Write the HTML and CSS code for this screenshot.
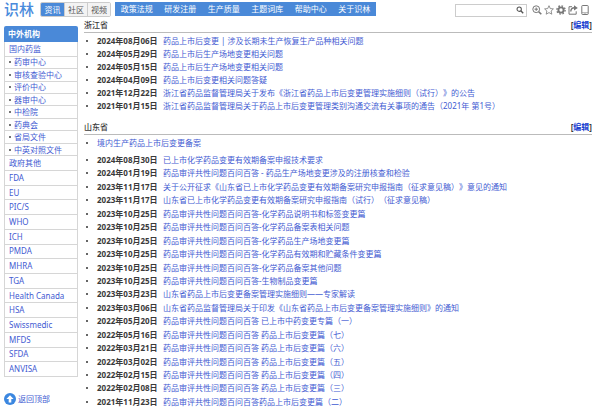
FILE: index.html
```html
<!DOCTYPE html>
<html lang="zh-CN">
<head>
<meta charset="utf-8">
<title>识林</title>
<link rel="stylesheet" href="styles.css">
</head>
<body>
<header class="top">
  <a class="logo" href="#">识林</a>
  <nav class="tabs"><a class="active" href="#">资讯</a><a href="#">社区</a><a href="#">视频</a></nav>
  <nav class="menu"><a href="#">政策法规</a><a href="#">研发注册</a><a href="#">生产质量</a><a href="#">主题词库</a><a href="#">帮助中心</a><a href="#">关于识林</a></nav>
  <form class="search">
    <input type="text" aria-label="搜索">
    <button type="button" aria-label="搜索"><svg viewBox="0 0 10 10"><circle cx="4" cy="4" r="2.7"/><path d="M6 6l3 3" stroke-width="1.8"/></svg></button>
  </form>
  <div class="tools">
    <a href="#" aria-label="高级搜索"><svg viewBox="0 0 10 10"><circle cx="4.2" cy="4.2" r="3.4"/><path d="M6.7 6.7l2.6 2.6" stroke-width="1.6"/><path d="M2.5 4.2h3.4M4.2 2.5v3.4"/></svg></a>
    <a href="#" aria-label="收藏"><svg viewBox="0 0 10 10"><path d="M5 .7l1.3 2.9 3.1.3-2.3 2.1.7 3.2L5 7.6 2.2 9.2l.7-3.2L.6 3.9l3.1-.3z" stroke-width=".8"/></svg></a>
    <a href="#" aria-label="设置"><svg viewBox="0 0 10 10"><circle cx="5" cy="5" r="2.6" stroke-width="1.9"/><circle cx="5" cy="5" r="4.1" stroke-width="1.4" stroke-dasharray="1.6 1.62"/></svg></a>
    <a href="#" aria-label="分享"><svg viewBox="0 0 10 10"><path d="M4 1.7H1v7.5h7.2V6.3"/><path d="M2.8 6.6c0-2.6 1.3-3.8 3.7-3.8" stroke-width="1.4"/><path class="solid" d="M6 .3l3.8 2.6L6 5.5z"/></svg></a>
    <a href="#" aria-label="手机版"><svg viewBox="0 0 10 10"><rect x="1.8" y=".5" width="6.4" height="9" rx=".7"/><path d="M2 7.7h6M4.4 8.7h1.2" stroke-width=".6"/></svg></a>
  </div>
</header>
<div class="page">
  <aside class="side">
    <nav class="orgs">
      <h2>中外机构</h2>
      <ul>
        <li><a href="#">国内药监</a></li>
        <li class="sub"><a href="#">药审中心</a></li>
        <li class="sub"><a href="#">审核查验中心</a></li>
        <li class="sub"><a href="#">评价中心</a></li>
        <li class="sub"><a href="#">器审中心</a></li>
        <li class="sub"><a href="#">中检院</a></li>
        <li class="sub"><a href="#">药典会</a></li>
        <li class="sub"><a href="#">省局文件</a></li>
        <li class="sub"><a href="#">中英对照文件</a></li>
        <li><a href="#">政府其他</a></li>
        <li><a href="#">FDA</a></li>
        <li><a href="#">EU</a></li>
        <li><a href="#">PIC/S</a></li>
        <li><a href="#">WHO</a></li>
        <li><a href="#">ICH</a></li>
        <li><a href="#">PMDA</a></li>
        <li><a href="#">MHRA</a></li>
        <li><a href="#">TGA</a></li>
        <li><a href="#">Health Canada</a></li>
        <li><a href="#">HSA</a></li>
        <li><a href="#">Swissmedic</a></li>
        <li><a href="#">MFDS</a></li>
        <li><a href="#">SFDA</a></li>
        <li><a href="#">ANVISA</a></li>
      </ul>
    </nav>
    <a class="back" href="#"><svg viewBox="0 0 12 12"><circle cx="6" cy="6" r="6"/><path d="M6 2.2l3.6 3.7H7.3v3.7H4.7V5.9H2.4z"/></svg>返回顶部</a>
  </aside>
  <main class="content">
    <div class="heading"><h3>浙江省</h3><span class="edit">[<a href="#">编辑</a>]</span></div>
    <ul class="news">
      <li><strong>2024年08月06日</strong><a href="#">药品上市后变更 | 涉及长期未生产恢复生产品种相关问题</a></li>
      <li><strong>2024年05月29日</strong><a href="#">药品上市后生产场地变更相关问题</a></li>
      <li><strong>2024年05月15日</strong><a href="#">药品上市后生产场地变更相关问题</a></li>
      <li><strong>2024年04月09日</strong><a href="#">药品上市后变更相关问题答疑</a></li>
      <li><strong>2021年12月22日</strong><a href="#">浙江省药品监督管理局关于发布《浙江省药品上市后变更管理实施细则（试行）》的公告</a></li>
      <li><strong>2021年01月15日</strong><a href="#">浙江省药品监督管理局关于药品上市后变更管理类别沟通交流有关事项的通告（2021年 第1号）</a></li>
    </ul>
    <div class="heading"><h3>山东省</h3><span class="edit">[<a href="#">编辑</a>]</span></div>
    <ul class="news">
      <li><a href="#">境内生产药品上市后变更备案</a></li>
    </ul>
    <ul class="news fill">
      <li><strong>2024年08月30日</strong><a href="#">已上市化学药品变更有效期备案申报技术要求</a></li>
      <li><strong>2024年01月19日</strong><a href="#">药品审评共性问题百问百答 - 药品生产场地变更涉及的注册核查和检验</a></li>
      <li><strong>2023年11月17日</strong><a href="#">关于公开征求《山东省已上市化学药品变更有效期备案研究申报指南（征求意见稿）》意见的通知</a></li>
      <li><strong>2023年11月17日</strong><a href="#">山东省已上市化学药品变更有效期备案研究申报指南（试行）（征求意见稿）</a></li>
      <li><strong>2023年10月25日</strong><a href="#">药品审评共性问题百问百答-化学药品说明书和标签变更篇</a></li>
      <li><strong>2023年10月25日</strong><a href="#">药品审评共性问题百问百答-化学药品备案表相关问题</a></li>
      <li><strong>2023年10月25日</strong><a href="#">药品审评共性问题百问百答-化学药品生产场地变更篇</a></li>
      <li><strong>2023年10月25日</strong><a href="#">药品审评共性问题百问百答-化学药品有效期和贮藏条件变更篇</a></li>
      <li><strong>2023年10月25日</strong><a href="#">药品审评共性问题百问百答-化学药品备案其他问题</a></li>
      <li><strong>2023年10月25日</strong><a href="#">药品审评共性问题百问百答-生物制品变更篇</a></li>
      <li><strong>2023年03月23日</strong><a href="#">山东省药品上市后变更备案管理实施细则——专家解读</a></li>
      <li><strong>2023年03月06日</strong><a href="#">山东省药品监督管理局关于印发《山东省药品上市后变更备案管理实施细则》的通知</a></li>
      <li><strong>2022年05月20日</strong><a href="#">药品审评共性问题百问百答 已上市中药变更专篇（一）</a></li>
      <li><strong>2022年05月16日</strong><a href="#">药品审评共性问题百问百答 药品上市后变更篇（七）</a></li>
      <li><strong>2022年03月21日</strong><a href="#">药品审评共性问题百问百答 药品上市后变更篇（六）</a></li>
      <li><strong>2022年03月02日</strong><a href="#">药品审评共性问题百问百答 药品上市后变更篇（五）</a></li>
      <li><strong>2022年02月15日</strong><a href="#">药品审评共性问题百问百答 药品上市后变更篇（四）</a></li>
      <li><strong>2022年02月08日</strong><a href="#">药品审评共性问题百问百答 药品上市后变更篇（三）</a></li>
      <li><strong>2021年11月23日</strong><a href="#">药品审评共性问题百问百答药品上市后变更篇（二）</a></li>
    </ul>
  </main>
</div>
</body>
</html>
```
FILE: styles.css
```css
* { box-sizing: border-box; }
body {
  margin: 0;
  min-height: 100vh;
  display: flex;
  flex-direction: column;
  background: #fff;
  color: #3a3a3a;
  font: 8px/13px "Noto Sans", "Noto Sans CJK SC", sans-serif;
  text-spacing-trim: space-all;
}
a { color: #3f5bd2; text-decoration: none; }
ul { list-style: none; margin: 0; padding: 0; }
h2, h3 { margin: 0; font-size: 8px; }
svg { display: block; fill: none; stroke: #777; }

.top {
  display: flex;
  align-items: center;
  height: 18px;
  padding: 0 10px 0 4px;
}
.logo {
  width: 36px;
  font-size: 15px;
  font-weight: 500;
  line-height: 18px;
  color: #4a8bdc;
  white-space: nowrap;
}
.tabs {
  display: flex;
  border: 1px solid #ccc;
  border-radius: 2px;
  overflow: hidden;
}
.tabs a {
  width: 23px;
  text-align: center;
  color: #555;
  background: #f3f3f3;
}
.tabs a + a { border-left: 1px solid #ccc; }
.tabs .active { background: #4a89d8; color: #fff; }
.menu {
  display: flex;
  justify-content: space-around;
  width: 261px;
  margin-left: 4px;
  background: #4a89d8;
  line-height: 14px;
}
.menu a { color: #fff; }
.search {
  display: flex;
  align-items: center;
  width: 72px;
  height: 13px;
  margin: 2px 5px 0 auto;
  border: 1px solid #ccc;
}
.search input { flex: 1; min-width: 0; height: 11px; padding: 0 2px; border: 0; outline: 0; font: inherit; }
.search button { width: 12px; padding: 0 2px; border: 0; background: none; }
.search svg { width: 8px; height: 8px; stroke: #555; stroke-width: 1.3; }
.tools { display: flex; gap: 2px; margin-top: 2px; }
.tools svg { width: 10px; height: 10px; }
.tools .solid { fill: #777; stroke: none; }

.page { flex: 1; display: flex; }
.side {
  display: flex;
  flex-direction: column;
  width: 74px;
  margin: 8px 6px 2px 4px;
}
.orgs { flex: 1; display: flex; flex-direction: column; }
.orgs h2 {
  padding: 1px 4px;
  line-height: 14px;
  color: #fff;
  background: #4a89d8;
  border-radius: 2px 2px 0 0;
}
.orgs ul { flex: 1; display: flex; flex-direction: column; border: 1px solid #d6d6d6; border-width: 0 1px; }
.orgs li {
  flex: 6 1 0;
  display: flex;
  align-items: center;
  padding-left: 4px;
  border-bottom: 1px solid #d6d6d6;
  line-height: 10px;
}
.orgs .sub { flex-grow: 5; }
.sub::before { content: ""; width: 2px; height: 2px; margin-right: 3px; border-radius: 1px; background: #444; }
.back { display: flex; align-items: center; gap: 2px; margin-top: 15px; }
.back svg { width: 12px; height: 12px; stroke: none; fill: #3b87e0; }
.back path { fill: #fff; }

.content { flex: 1; display: flex; flex-direction: column; padding-right: 8px; }
.heading {
  display: flex;
  justify-content: space-between;
  padding-bottom: 1px;
  border-bottom: 1px solid #bbb;
}
.heading h3 { font-weight: 500; }
.edit { font-weight: 700; }
.edit a { color: #1a3fd0; }
.news { padding-top: 1px; }
.news + .heading { margin-top: 8px; }
.news li { display: flex; align-items: center; gap: 2px; }
.news li::before { content: ""; width: 2px; height: 2px; margin: 0 7px 0 2px; border-radius: 1px; background: #333; }
.news strong { min-width: 64px; }
.news.fill {
  flex: 1;
  display: flex;
  flex-direction: column;
  justify-content: space-between;
  padding-top: 6px;
  line-height: 10px;
}
```
